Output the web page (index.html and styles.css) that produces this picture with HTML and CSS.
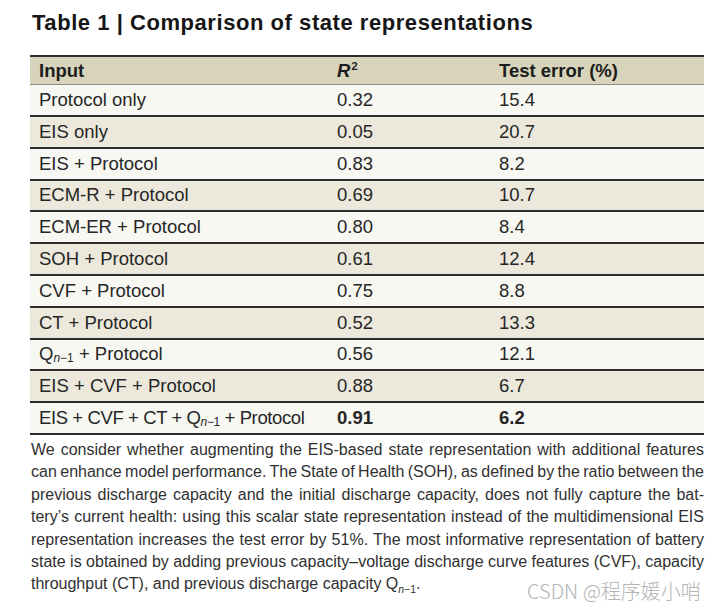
FILE: index.html
```html
<!DOCTYPE html>
<html>
<head>
<meta charset="utf-8">
<link rel="stylesheet" href="styles.css">
</head>
<body>
<div class="page">
  <h1 class="title">Table 1 | Comparison of state representations</h1>
  <div class="table">
    <div class="row head">
      <div class="cell">Input</div>
      <div class="cell"><i>R</i><sup>2</sup></div>
      <div class="cell">Test error (%)</div>
    </div>
    <div class="row odd first">
      <div class="cell">Protocol only</div><div class="cell">0.32</div><div class="cell">15.4</div>
    </div>
    <div class="row even">
      <div class="cell">EIS only</div><div class="cell">0.05</div><div class="cell">20.7</div>
    </div>
    <div class="row odd">
      <div class="cell">EIS + Protocol</div><div class="cell">0.83</div><div class="cell">8.2</div>
    </div>
    <div class="row even">
      <div class="cell">ECM-R + Protocol</div><div class="cell">0.69</div><div class="cell">10.7</div>
    </div>
    <div class="row odd">
      <div class="cell">ECM-ER + Protocol</div><div class="cell">0.80</div><div class="cell">8.4</div>
    </div>
    <div class="row even">
      <div class="cell">SOH + Protocol</div><div class="cell">0.61</div><div class="cell">12.4</div>
    </div>
    <div class="row odd">
      <div class="cell">CVF + Protocol</div><div class="cell">0.75</div><div class="cell">8.8</div>
    </div>
    <div class="row even">
      <div class="cell">CT + Protocol</div><div class="cell">0.52</div><div class="cell">13.3</div>
    </div>
    <div class="row odd">
      <div class="cell">Q<sub><i>n</i>−1</sub>&nbsp;+ Protocol</div><div class="cell">0.56</div><div class="cell">12.1</div>
    </div>
    <div class="row even">
      <div class="cell">EIS + CVF + Protocol</div><div class="cell">0.88</div><div class="cell">6.7</div>
    </div>
    <div class="row odd last">
      <div class="cell tight">EIS + CVF + CT + Q<sub><i>n</i>−1</sub>&nbsp;+ Protocol</div><div class="cell"><b>0.91</b></div><div class="cell"><b>6.2</b></div>
    </div>
  </div>
  <p class="caption">
    <span class="line">We consider whether augmenting the EIS-based state representation with additional features</span>
    <span class="line">can enhance model performance. The State of Health (SOH), as defined by the ratio between the</span>
    <span class="line">previous discharge capacity and the initial discharge capacity, does not fully capture the bat-</span>
    <span class="line">tery’s current health: using this scalar state representation instead of the multidimensional EIS</span>
    <span class="line">representation increases the test error by 51%. The most informative representation of battery</span>
    <span class="line">state is obtained by adding previous capacity–voltage discharge curve features (CVF), capacity</span>
    <span class="line end">throughput (CT), and previous discharge capacity Q<sub><i>n</i>−1</sub>.</span>
  </p>
  <div class="watermark">CSDN @程序媛小哨</div>
</div>
</body>
</html>
```
FILE: styles.css
```css
html, body {
  margin: 0;
  padding: 0;
  background: #ffffff;
}
.page {
  position: relative;
  width: 713px;
  height: 612px;
  padding: 10px 9px 0 30px;
  box-sizing: border-box;
  font-family: "Liberation Sans", Arial, sans-serif;
  color: #222;
}
.title {
  margin: 0 0 19px 2px;
  font-size: 22px;
  line-height: 26px;
  font-weight: bold;
  color: #161616;
  letter-spacing: 0.55px;
}
.table {
  border-top: 2px solid #2d2d2d;
  border-bottom: 2px solid #2d2d2d;
}
.row {
  display: grid;
  grid-template-columns: 298px 162px 1fr;
  height: 29.8px;
  border-top: 2px solid #2d2d2d;
  font-size: 18.5px;
  color: #262626;
}
.row .cell {
  display: flex;
  align-items: center;
  padding-left: 9px;
  white-space: nowrap;
}
.row .cell.tight {
  letter-spacing: -0.4px;
}
.head {
  border-top: none;
  height: 27px;
  background: #d7d4bb;
  font-weight: bold;
  color: #1c1c1c;
}
.first {
  border-top: 1px solid #8f8e86;
  height: 30px;
}
.odd { background: #f8f8f3; }
.even { background: #ece9dc; }
sup {
  font-size: 0.6em;
  position: relative;
  top: -0.45em;
  vertical-align: baseline;
  margin-left: 1px;
}
sub {
  font-size: 0.65em;
  position: relative;
  top: 0.3em;
  vertical-align: baseline;
}
.caption {
  margin: 4px 0 0 1px;
  font-size: 16px;
  line-height: 22.4px;
  color: #303030;
  word-spacing: -1.4px;
}
.line {
  display: block;
  text-align: justify;
  text-align-last: justify;
  white-space: nowrap;
}
.line.end {
  text-align-last: left;
  word-spacing: 0;
}
.watermark {
  position: absolute;
  left: 527px;
  top: 579px;
  font-family: "Noto Sans CJK SC", sans-serif;
  font-size: 20px;
  line-height: 24px;
  color: #b4b4b4;
  font-weight: 300;
}
```
